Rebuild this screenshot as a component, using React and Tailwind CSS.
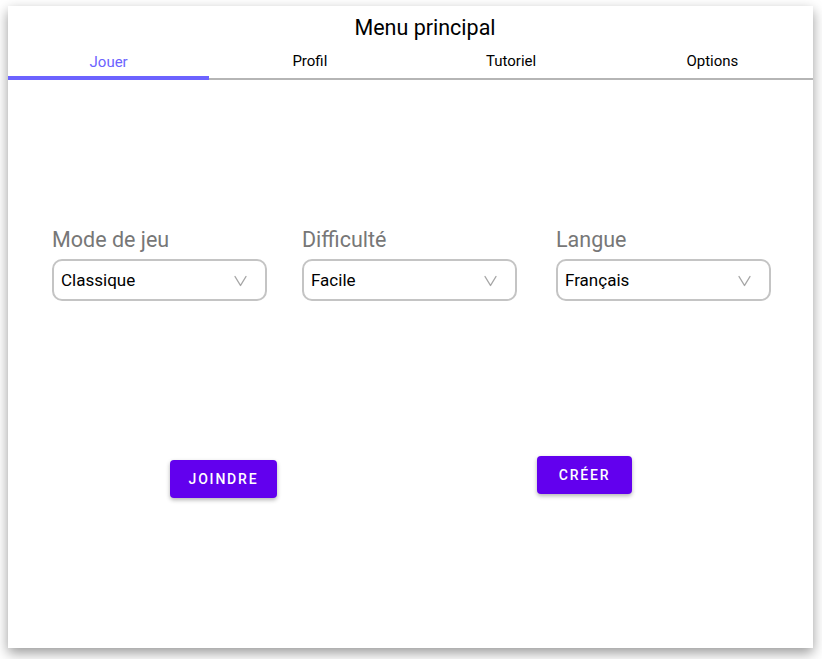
import { useState } from 'react';

const tabs = ['Jouer', 'Profil', 'Tutoriel', 'Options'];

const selects = [
  { label: 'Mode de jeu', value: 'Classique' },
  { label: 'Difficulté', value: 'Facile' },
  { label: 'Langue', value: 'Français' },
];

function Chevron() {
  return (
    <svg width="13" height="12" viewBox="0 0 13 12" fill="none">
      <path d="M1 1.5L6.5 10.5L12 1.5" stroke="#a6a6a6" strokeWidth="1.4" strokeLinecap="round" strokeLinejoin="round" />
    </svg>
  );
}

function SelectField({ label, value, className = '' }) {
  return (
    <div className={`flex flex-col w-[215px] ${className}`}>
      <span className="text-[21.5px] leading-[24px] text-[#777777]">{label}</span>
      <div className="mt-[7px] h-[42px] border-2 border-[#c4c4c4] rounded-[10px] flex items-center justify-between pl-[7px] pr-[18px] pt-[2px]">
        <span className="text-[17px] text-black">{value}</span>
        <Chevron />
      </div>
    </div>
  );
}

export default function App() {
  const [active, setActive] = useState(0);

  return (
    <div className="w-[822px] h-[659px] bg-white overflow-hidden pt-[6px] pl-[8px] font-['Roboto',sans-serif]">
      <div className="w-[805px] h-[642px] bg-white shadow-[0_5px_12px_rgba(0,0,0,0.4)] flex flex-col">
        <div className="h-[42px] flex items-center justify-center pl-[29px] pt-[1px]">
          <h1 className="text-[21.5px] text-black leading-none">Menu principal</h1>
        </div>
        <div className="flex h-[32px]">
          {tabs.map((t, i) => (
            <button
              key={t}
              onClick={() => setActive(i)}
              className={
                i === active
                  ? 'flex-1 flex justify-center items-start pt-[4px] text-[15px] leading-[20px] text-[#6c63ff] border-b-4 border-[#6c63ff]'
                  : 'flex-1 flex justify-center items-start pt-[3px] text-[15px] leading-[20px] text-black border-b-2 border-[#b5b5b5]'
              }
            >
              {t}
            </button>
          ))}
        </div>

        <div className="flex mt-[148px] pl-[44px]">
          <SelectField {...selects[0]} />
          <SelectField {...selects[1]} className="ml-[35px]" />
          <SelectField {...selects[2]} className="ml-[39px]" />
        </div>

        <div className="flex items-start mt-[155px]">
          <button className="ml-[162px] mt-[4px] w-[107px] h-[38px] rounded-[4px] bg-[#6200ee] text-white text-[14px] font-medium tracking-[1.8px] shadow-[0_2px_4px_rgba(0,0,0,0.3)]">
            JOINDRE
          </button>
          <button className="ml-[260px] w-[95px] h-[38px] rounded-[4px] bg-[#6200ee] text-white text-[14px] font-medium tracking-[1.8px] shadow-[0_2px_4px_rgba(0,0,0,0.3)]">
            CRÉER
          </button>
        </div>
      </div>
    </div>
  );
}
